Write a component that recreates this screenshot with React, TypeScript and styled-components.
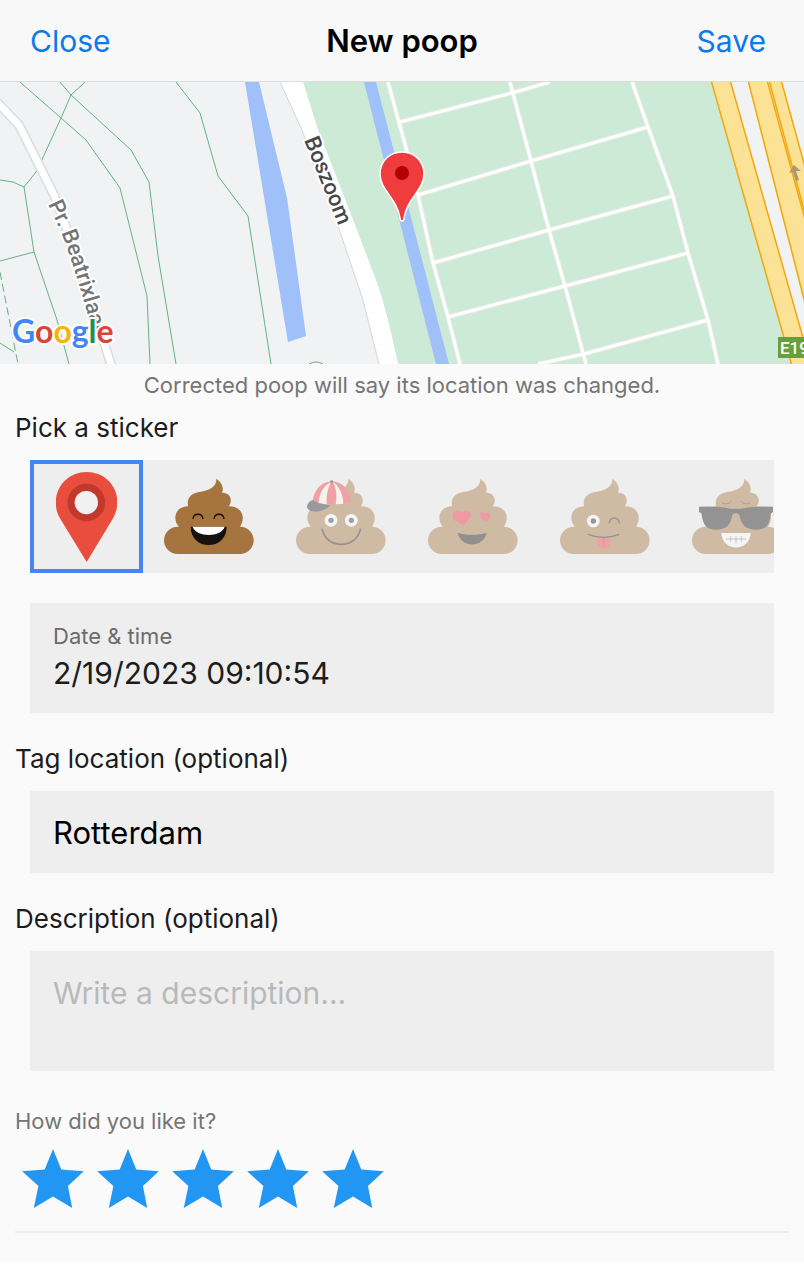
import React, { useState } from 'react';
import styled, { createGlobalStyle } from 'styled-components';

const GlobalStyle = createGlobalStyle`
  * { box-sizing: border-box; }
  body {
    margin: 0;
    background: #ffffff;
    color: #1c1c1c;
    font-family: Inter, "Liberation Sans", sans-serif;
  }
  button, input, textarea { font: inherit; color: inherit; }
`;

const Screen = styled.div`
  background: #fafafa;
`;

const NavBar = styled.header`
  display: grid;
  grid-template-columns: 1fr auto 1fr;
  align-items: center;
  height: 82px;
  padding: 0 30px;
  background: #f8f8f8;
  border-bottom: 1px solid #dcdcdd;
`;

const NavButton = styled.button<{ $end?: boolean }>`
  justify-self: ${(p) => (p.$end ? 'end' : 'start')};
  padding: 0 ${(p) => (p.$end ? 8 : 0)}px 0 0;
  border: 0;
  background: none;
  color: #0a7aec;
  font-size: 30px;
  line-height: 40px;
  cursor: pointer;
`;

const NavTitle = styled.h1`
  margin: 0;
  color: #000000;
  font-size: 31px;
  font-weight: 600;
  line-height: 40px;
`;

const MapView = styled.svg`
  display: block;
  width: 100%;
  height: 282px;
  background: #f0f2f4;
`;

const Hint = styled.p`
  margin: 0;
  padding: 6px 15px;
  color: #757575;
  font-size: 22px;
  line-height: 30px;
  text-align: center;
`;

const Form = styled.form`
  display: flex;
  flex-direction: column;
  padding: 6px 15px 29px;
`;

const FieldGroup = styled.div`
  display: flex;
  flex-direction: column;
  gap: 16px;
  margin-bottom: 30px;
`;

const FieldTitle = styled.label`
  font-size: 26px;
  line-height: 32px;
`;

const StickerStrip = styled.div`
  display: flex;
  height: 113px;
  margin: 0 15px;
  background: #eeeeee;
  overflow-x: auto;
  scrollbar-width: none;
`;

const StickerButton = styled.button<{ $selected: boolean; $pin?: boolean; $faded?: boolean }>`
  display: flex;
  flex: 0 0 ${(p) => (p.$pin ? 113 : 132)}px;
  align-items: center;
  justify-content: center;
  padding: 0;
  border: ${(p) => (p.$selected ? '4px solid #4587f2' : '0')};
  background: none;
  cursor: pointer;

  svg { opacity: ${(p) => (p.$faded ? 0.42 : 1)}; }
`;

const Panel = styled.div`
  display: flex;
  flex-direction: column;
  height: 110px;
  margin: 0 15px 30px;
  padding: 18px 23px;
  background: #eeeeee;
`;

const SmallLabel = styled.label`
  color: #6b6b6b;
  font-size: 22px;
  line-height: 30px;
`;

const PanelInput = styled.input`
  width: 100%;
  padding: 0;
  border: 0;
  outline: 0;
  background: none;
  font-size: 30px;
  line-height: 44px;
`;

const TextField = styled.input`
  height: 82px;
  margin: 0 15px;
  padding: 0 23px;
  border: 0;
  border-radius: 0;
  outline: 0;
  background: #eeeeee;
  color: #000000;
  font-size: 31px;
`;

const TextArea = styled.textarea`
  height: 120px;
  margin: 0 15px;
  padding: 20px 23px;
  border: 0;
  outline: 0;
  background: #eeeeee;
  color: #000000;
  font-size: 30px;
  line-height: 44px;
  resize: none;

  &::placeholder { color: #b9b9b9; opacity: 1; }
`;

const Rating = styled.fieldset`
  margin: 5px 0 0;
  padding: 0 0 23px;
  border: 0;
  border-bottom: 2px solid #eeeeee;
`;

const RatingLegend = styled.legend`
  padding: 0;
  margin-bottom: 13px;
  color: #757575;
  font-size: 22px;
  line-height: 30px;
`;

const Stars = styled.div`
  display: flex;
`;

const StarLabel = styled.label`
  position: relative;
  display: flex;
  justify-content: center;
  width: 75px;
  cursor: pointer;
`;

const StarInput = styled.input`
  position: absolute;
  inset: 0;
  margin: 0;
  opacity: 0;
`;

const MapLabel = styled.text`
  font-family: Roboto, sans-serif;
  font-size: 22px;
  font-weight: 500;
  stroke: #ffffff;
  stroke-width: 4px;
  stroke-linejoin: round;
  paint-order: stroke;
`;

const Logo = styled(MapLabel)`
  font-family: Lato, sans-serif;
  font-size: 32px;
  font-weight: 700;
`;

const streets =
  'M388 82L406 148L418 195L433 263L448 317L460 364M510 82L531 161L549 230L565 286L586 364' +
  'M632 82L648 127L673 196L688 253L708 320L718 364M400 122L512 93L550 82M418 195L531 161L648 127' +
  'M433 263L549 230L673 196M448 317L565 286L688 253M538 364L584 354L708 320';

const LocationMap = () => (
  <MapView viewBox="0 82 804 282" preserveAspectRatio="xMidYMid slice" role="img" aria-label="Map of the location">
    <rect y="82" width="804" height="282" fill="#f0f2f4" />
    <path d="M303 82H712L792 364H398Q386 308 377 283L352 217L318 130Z" fill="#cdead7" />
    <path d="M280 82L302 130L337 223L363 300L379 364H398Q386 308 377 283L352 217L318 130L303 82Z" fill="#ffffff" />
    <path d="M280 82L302 130L337 223L363 300L379 364" fill="none" stroke="#d3d5d7" />
    <path d="M245 82H259L287 198L306 336L288 342Z" fill="#9fc0f9" />
    <path d="M364 82H376L449 364H436Z" fill="#9fc0f9" />
    <path d={streets} fill="none" stroke="#e3ebe1" strokeWidth="5" />
    <path d={streets} fill="none" stroke="#ffffff" strokeWidth="3" />
    <g fill="none" stroke="#64b283" strokeWidth="1">
      <path d="M20 82L86 140L120 188L147 296L150 364" />
      <path d="M60 82L71 95L131 150L149 182L158 256L176 364" />
      <path d="M85 82L71 95L61 118L40 164L36 172L24 187L13 182L0 180" />
      <path d="M24 187L34 252L57 320L69 364M34 252L0 261M0 343L14 352" />
      <path d="M176 82L200 113L218 176L248 216L271 364" />
      <path d="M309 364Q316 360 323 364" />
      <path d="M0 272L18 364" strokeDasharray="8 4" />
    </g>
    <path d="M-4 101L19 125L55 197L85 280L112 368" fill="none" stroke="#dadcde" strokeWidth="10" />
    <path d="M-4 101L19 125L55 197L85 280L112 368" fill="none" stroke="#ffffff" strokeWidth="7" />
    <g fill="#fbe294" stroke="#f2a80d" strokeWidth="1.5">
      <path d="M711 80L792 366H811L730 80Z" />
      <path d="M748 80L821 366H845L767 80Z" />
      <path d="M769 80L846 366H860L781 80Z" />
    </g>
    <path d="M794 165L789 173L793 172L796 181L799 180L796 171L801 171Z" fill="#ab9878" />
    <rect x="778" y="337" width="40" height="21" fill="#689f3c" />
    <text x="780" y="354" fill="#ffffff" fontFamily="Roboto, sans-serif" fontSize="17" fontWeight="500">E19</text>
    <MapLabel fill="#47484a" transform="translate(304 140) rotate(68)">Boszoom</MapLabel>
    <path id="beatrix" d="M48 204L61 232Q78 275 97 350" fill="none" />
    <MapLabel fill="#757575">
      <textPath href="#beatrix">Pr. Beatrixlaan</textPath>
    </MapLabel>
    <Logo x="12" y="343">
      <tspan fill="#4285f4">G</tspan>
      <tspan fill="#db4437">o</tspan>
      <tspan fill="#f4b400">o</tspan>
      <tspan fill="#4285f4">g</tspan>
      <tspan fill="#1e9150">l</tspan>
      <tspan fill="#db4437">e</tspan>
    </Logo>
    <path
      d="M402 152C389 152 380 162 380 174C380 190 397 198 400 218Q400 221 402 221Q404 221 404 218C407 198 424 190 424 174C424 162 415 152 402 152Z"
      fill="#f13c3d"
      stroke="#ffffff"
      strokeWidth="1.5"
    />
    <circle cx="402" cy="173" r="7" fill="#b20202" />
  </MapView>
);

const PinIcon = () => (
  <svg width="61" height="90" viewBox="0 0 183 271" aria-hidden="true">
    <path d="M92 271L12 140C-25 75 20 0 92 0S208 75 171 140Z" fill="#e84d3d" />
    <circle cx="91" cy="92" r="46" fill="none" stroke="#c1392b" strokeWidth="21" />
    <circle cx="91" cy="92" r="35" fill="#f1f1f1" />
  </svg>
);

const Poop = ({ children }: { children: React.ReactNode }) => (
  <svg width="90" height="77" viewBox="0 0 270 231" aria-hidden="true" fill="none">
    <path
      d="M41 228A41 41 0 0 1 41 146L45 146C25 125 32 86 72 85C68 60 80 47 105 42C135 37 158 28 157 2C175 15 180 30 174 44C203 44 206 72 194 85C236 84 246 122 228 146A41 41 0 0 1 228 228Z"
      fill="#a6753f"
    />
    {children}
  </svg>
);

const Laughing = () => (
  <Poop>
    <path d="M87 123C89 104 115 104 117 123M150 123C152 104 178 104 180 123" stroke="#17120d" strokeWidth="4" />
    <path d="M80 146H188C188 182 162 201 134 201S80 182 80 146Z" fill="#14110f" />
    <path d="M86 146H182C172 179 96 179 86 146Z" fill="#ffffff" />
  </Poop>
);

const Capped = () => (
  <Poop>
    <path d="M50 72C52 38 75 11 107 10C140 10 162 38 164 72Q135 84 107 79Q75 78 50 72Z" fill="#f33845" />
    <path d="M105 11C80 25 70 48 68 75L92 79C90 50 98 25 105 11ZM110 11C122 28 123 58 119 79L142 78C142 48 128 22 110 11Z" fill="#fff6e8" />
    <circle cx="107" cy="11" r="5" fill="#5c2228" />
    <path d="M50 66C36 71 31 83 34 90C40 106 82 105 104 82C85 80 65 76 50 66Z" fill="#20262d" />
    <circle cx="105" cy="127" r="19" fill="#ffffff" />
    <circle cx="166" cy="127" r="19" fill="#ffffff" />
    <circle cx="105" cy="127" r="8" fill="#17384a" />
    <circle cx="166" cy="127" r="8" fill="#17384a" />
    <path d="M78 152C90 215 181 215 194 152" stroke="#1b1714" strokeWidth="5" />
  </Poop>
);

const InLove = () => (
  <Poop>
    <path d="M107 143L77 125C69 106 78 97 89 98Q98 97 102 104Q108 95 119 98C132 102 133 117 120 126Z" fill="#f02840" />
    <path d="M175 131L158 119C151 107 158 101 165 103Q170 104 171 108Q177 101 184 105C190 112 186 120 175 131Z" fill="#f02840" />
    <path d="M89 165C115 172 150 172 176 165C165 211 100 211 89 165Z" fill="#16110f" />
  </Poop>
);

const Winking = () => (
  <Poop>
    <circle cx="100" cy="129" r="19" fill="#ffffff" />
    <circle cx="100" cy="129" r="8" fill="#17242c" />
    <path d="M148 136C150 115 176 115 178 136" stroke="#1b1714" strokeWidth="4" />
    <path d="M112 177V192C112 219 151 219 151 192V177Z" fill="#f33845" />
    <path d="M131 178V204" stroke="#a51f36" strokeWidth="2" />
    <path d="M84 169Q130 187 178 169" stroke="#1b1714" strokeWidth="4" />
  </Poop>
);

const Cool = () => (
  <Poop>
    <path d="M88 74Q105 84 119 69M146 69Q157 82 176 75" stroke="#4f3620" strokeWidth="3" />
    <path
      d="M21 86Q80 83 115 92H148Q185 83 243 86V102L237 106C233 140 223 155 195 155C165 155 148 145 142 110Q131 102 121 110C115 145 100 155 70 155C42 155 33 140 28 106L21 102Z"
      fill="#17171a"
    />
    <path d="M88 165H176C174 223 90 223 88 165Z" fill="#ffffff" />
    <path d="M102 183H162M116 174V193M132 174V196M148 174V193" stroke="#596877" strokeWidth="2" />
  </Poop>
);

const stickers = [
  { name: 'Pin', Icon: PinIcon },
  { name: 'Laughing', Icon: Laughing },
  { name: 'Capped', Icon: Capped },
  { name: 'In love', Icon: InLove },
  { name: 'Winking', Icon: Winking },
  { name: 'Cool', Icon: Cool },
];

export default function App() {
  const [sticker, setSticker] = useState('Pin');
  const [rating, setRating] = useState(5);

  return (
    <Screen>
      <GlobalStyle />
      <NavBar>
        <NavButton type="button">Close</NavButton>
        <NavTitle>New poop</NavTitle>
        <NavButton type="submit" form="entry" $end>Save</NavButton>
      </NavBar>
      <LocationMap />
      <Hint>Corrected poop will say its location was changed.</Hint>
      <Form id="entry" onSubmit={(e) => e.preventDefault()}>
        <FieldGroup>
          <FieldTitle as="span" id="sticker-title">Pick a sticker</FieldTitle>
          <StickerStrip role="group" aria-labelledby="sticker-title">
            {stickers.map(({ name, Icon }, i) => (
              <StickerButton
                key={name}
                type="button"
                aria-label={name}
                aria-pressed={sticker === name}
                $selected={sticker === name}
                $pin={i === 0}
                $faded={i > 1}
                onClick={() => setSticker(name)}
              >
                <Icon />
              </StickerButton>
            ))}
          </StickerStrip>
        </FieldGroup>
        <Panel>
          <SmallLabel htmlFor="date">Date &amp; time</SmallLabel>
          <PanelInput id="date" type="text" defaultValue="2/19/2023 09:10:54" />
        </Panel>
        <FieldGroup>
          <FieldTitle htmlFor="tag">Tag location (optional)</FieldTitle>
          <TextField id="tag" type="text" defaultValue="Rotterdam" />
        </FieldGroup>
        <FieldGroup>
          <FieldTitle htmlFor="description">Description (optional)</FieldTitle>
          <TextArea id="description" placeholder="Write a description..." />
        </FieldGroup>
        <Rating>
          <RatingLegend>How did you like it?</RatingLegend>
          <Stars>
            {[1, 2, 3, 4, 5].map((n) => (
              <StarLabel key={n}>
                <StarInput
                  type="radio"
                  name="rating"
                  aria-label={`${n} of 5`}
                  checked={rating === n}
                  onChange={() => setRating(n)}
                />
                <svg width="62" height="59" viewBox="0 0 186 178" aria-hidden="true">
                  <path
                    d="M93 0L118 62L186 67L138 112L151 178L93 143L35 178L49 112L0 67L68 62Z"
                    fill={n <= rating ? '#2196f3' : '#d5d5d5'}
                  />
                </svg>
              </StarLabel>
            ))}
          </Stars>
        </Rating>
      </Form>
    </Screen>
  );
}
